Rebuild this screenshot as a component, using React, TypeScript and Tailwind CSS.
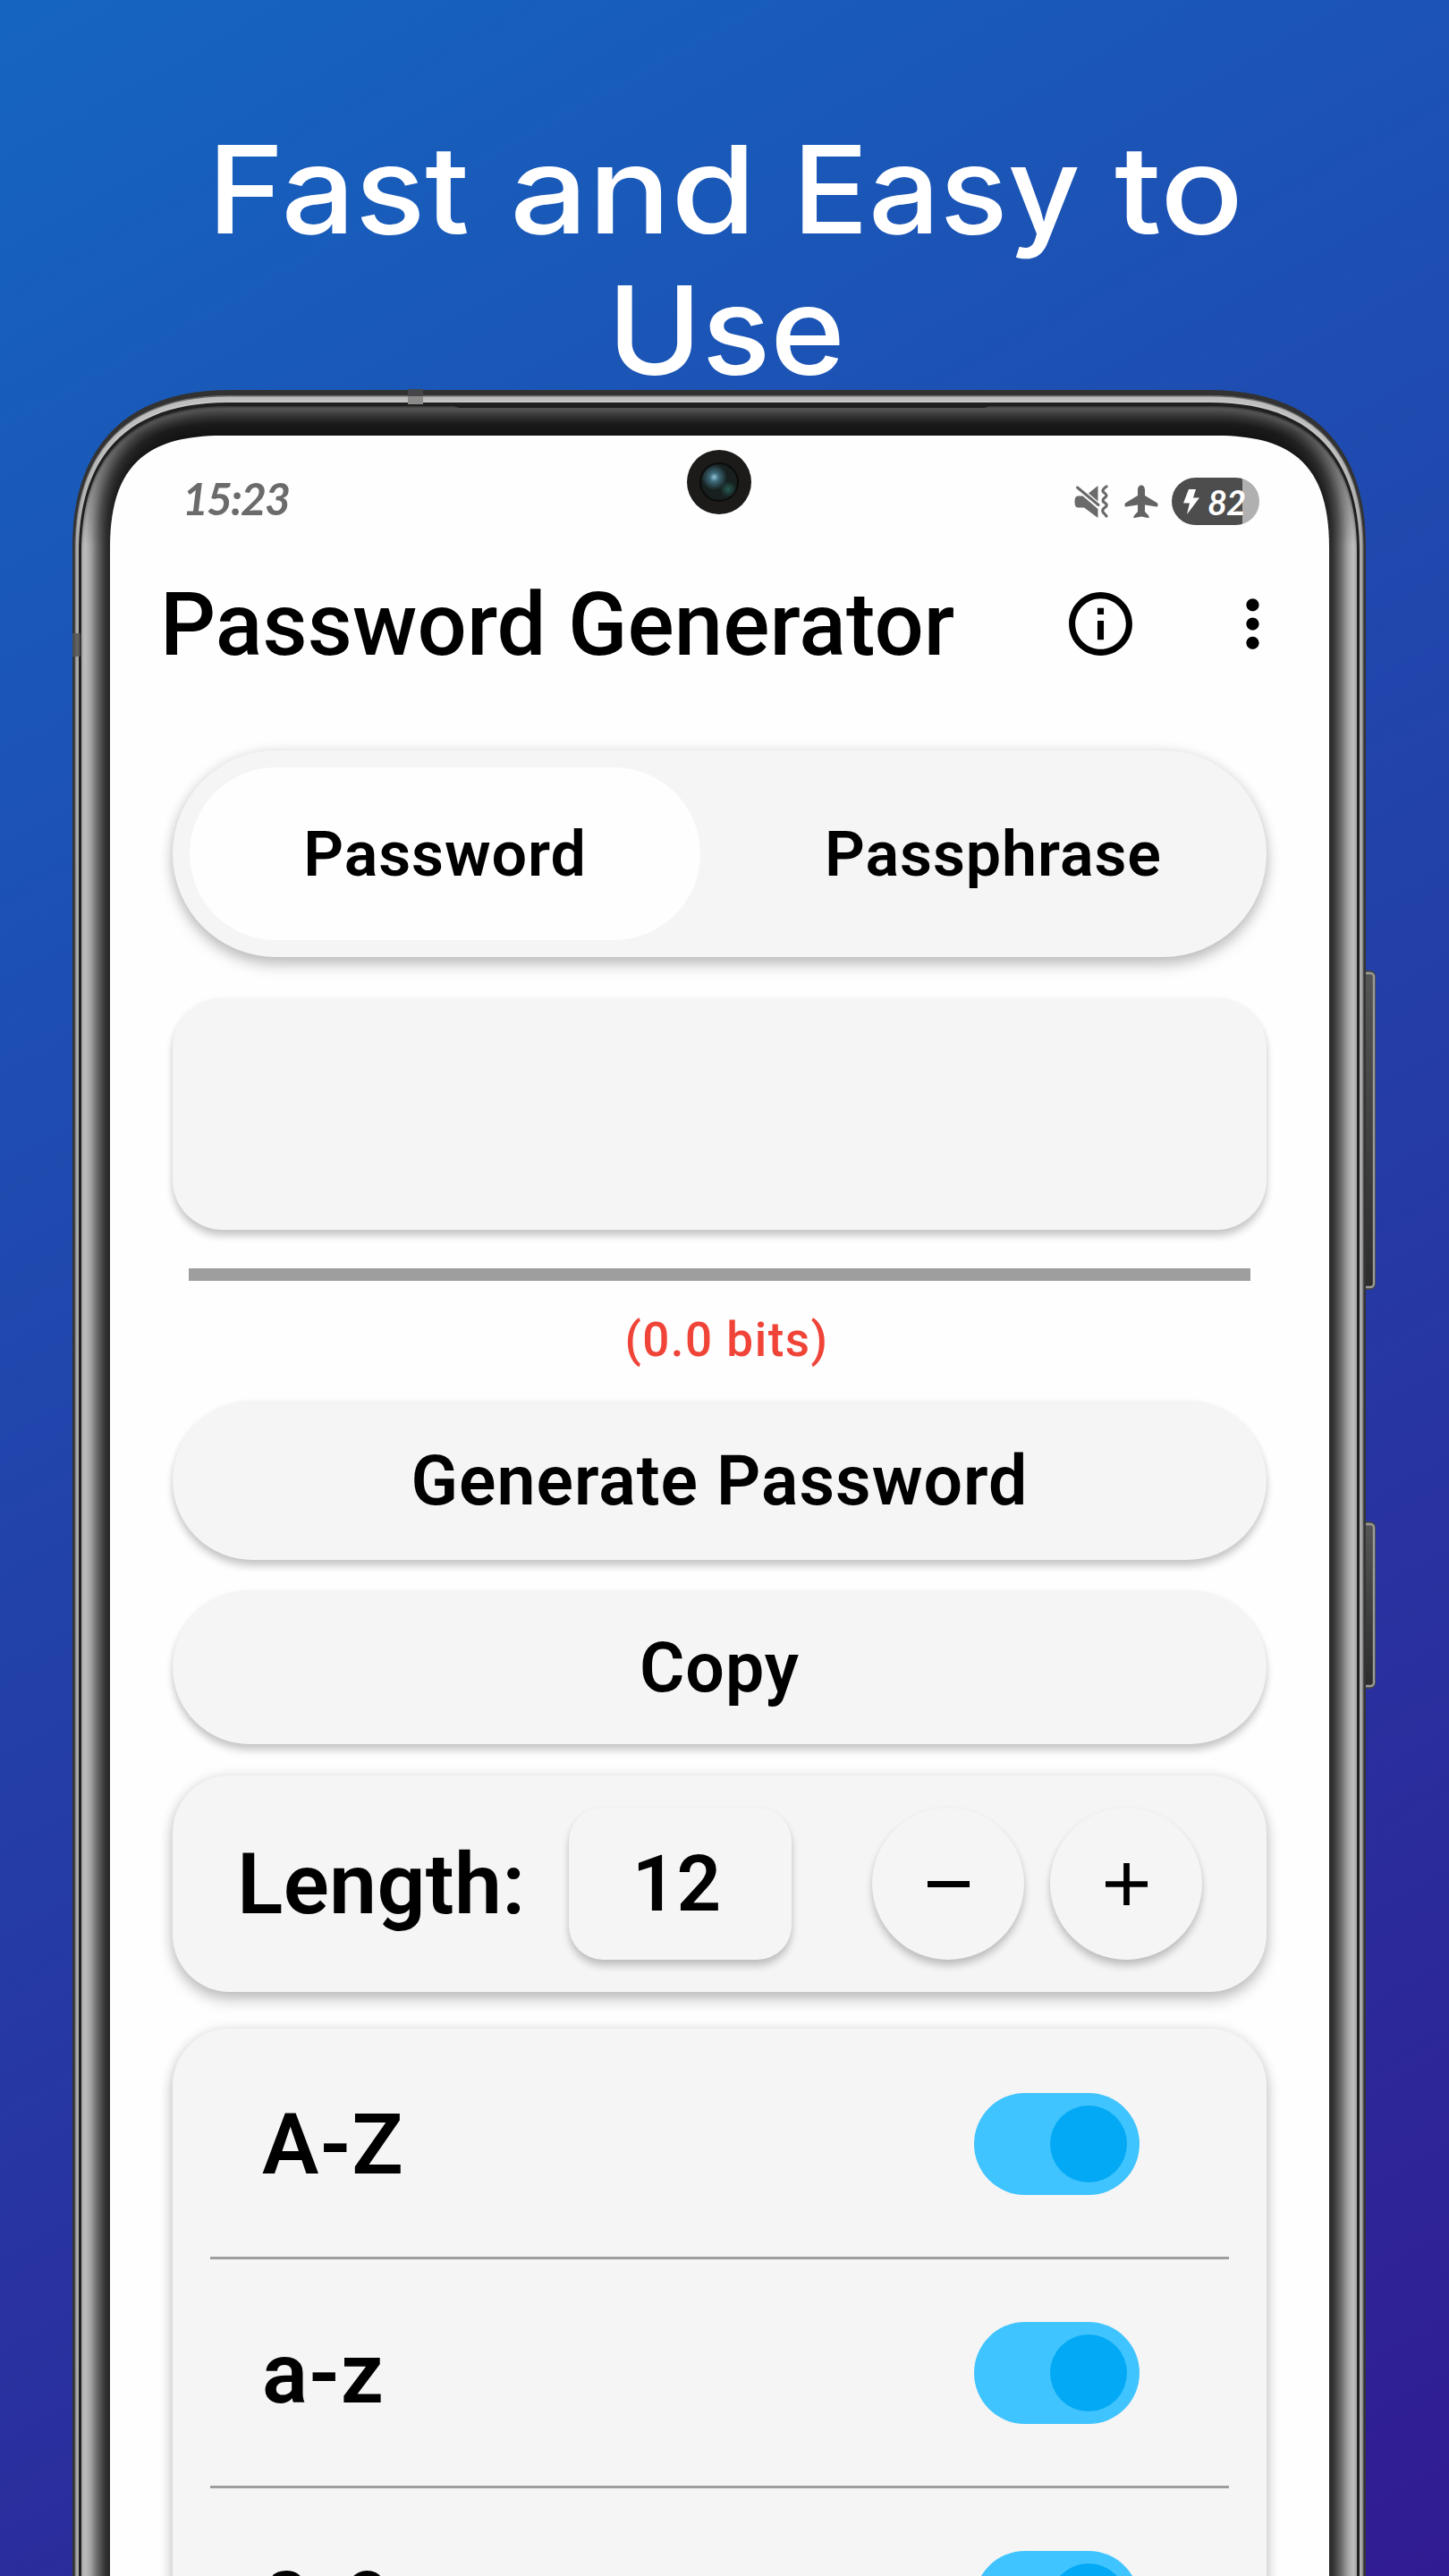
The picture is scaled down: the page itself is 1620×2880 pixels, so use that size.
import React from "react";
import { MdInfoOutline, MdMoreVert } from "react-icons/md";

type Corner = { l: number; t: number; r: number; k: number };

// Screen-shaped outline that runs off the bottom of the page.
function outline({ l, t, r, k }: Corner, right: number) {
  const c = r * (1 - k);
  return `M${l} 2900V${t + r}C${l} ${t + c} ${l + c} ${t} ${l + r} ${t}H${right - r}C${right - c} ${t} ${right} ${t + c} ${right} ${t + r}V2900Z`;
}

const OUTER = { l: 81, t: 436, right: 1527, r: 175, k: 0.648 };
const INNER = { l: 123, t: 487, right: 1486, r: 125, k: 0.702 };

const mix = (a: number, b: number, f: number) => a + (b - a) * f;

function ramp(stops: [number, number][], f: number) {
  for (let i = 1; i < stops.length; i++) {
    if (f <= stops[i][0]) {
      const [a, va] = stops[i - 1];
      const [b, vb] = stops[i];
      return Math.round(mix(va, vb, (f - a) / (b - a)));
    }
  }
  return stops[stops.length - 1][1];
}

// [inset left, inset top, grey at sides, grey at top]
const rims: [number, number, number, number][] = [
  [0, 0, 52, 50],
  [2.5, 6, 100, 110],
  [3.5, 7.5, 165, 190],
  [5.5, 12, 175, 200],
  [7, 14, 30, 32],
  [8.5, 17, 34, 30],
];
const STEPS = 28;
for (let i = 0; i < STEPS; i++) {
  const f = i / (STEPS - 1);
  rims.push([
    mix(10, 41, f),
    mix(18, 50, f),
    ramp([[0, 165], [0.1, 190], [0.3, 165], [0.6, 95], [0.85, 50], [1, 38]], f),
    ramp([[0, 60], [0.08, 84], [0.35, 50], [0.6, 26], [1, 18]], f),
  ]);
}

function PhoneFrame() {
  return (
    <svg className="absolute inset-0 -z-10 h-[2880px] w-[1620px]" viewBox="0 0 1620 2880">
      <defs>
        {rims.map(([, , side, top], i) => (
          <linearGradient key={i} id={`rim${i}`} gradientUnits="userSpaceOnUse" x1="0" x2="0" y1="436" y2="610">
            <stop offset="0.28" stopColor={`rgb(${top},${top},${top})`} />
            <stop offset="1" stopColor={`rgb(${side},${side},${side})`} />
          </linearGradient>
        ))}
        <linearGradient id="key" x1="0" x2="0" y1="0" y2="1">
          <stop offset="0" stopColor="#555" />
          <stop offset="1" stopColor="#2c2c2c" />
        </linearGradient>
      </defs>
      {[
        [1085, 1442],
        [1701, 1888],
      ].map(([a, b]) => (
        <g key={a}>
          <rect x="1510" y={a} width="28" height={b - a} rx="6" fill="#444" />
          <rect x="1510" y={a + 3} width="26" height={b - a - 6} rx="4" fill="url(#key)" stroke="#9b9b96" strokeWidth="2.4" />
        </g>
      ))}
      {rims.map(([dx, dy], i) => {
        const f = dx / (INNER.l - OUTER.l);
        return (
          <path
            key={i}
            fill={`url(#rim${i})`}
            d={outline({ l: OUTER.l + dx, t: OUTER.t + dy, r: mix(OUTER.r, INNER.r, f), k: mix(OUTER.k, INNER.k, f) }, OUTER.right - dx)}
          />
        );
      })}
      <path d="M506 453.5L514 456H1100L1108 453.5Z" fill="#1e1e1e" />
      <rect x="456" y="435" width="17" height="8" fill="#44464a" />
      <rect x="456" y="443" width="17" height="9" fill="#8a8a88" />
      <rect x="81" y="708" width="9" height="26" fill="#555" fillOpacity="0.85" />
      <path fill="#fefefe" d={outline(INNER, INNER.right)} />
    </svg>
  );
}

function Camera() {
  return (
    <svg className="absolute left-[644px] top-[15px] size-[74px]" viewBox="0 0 74 74">
      <defs>
        <radialGradient id="lens" cx="0.37" cy="0.37" r="0.34">
          <stop offset="0" stopColor="#8fc4d6" />
          <stop offset="0.35" stopColor="#3f6b7c" />
          <stop offset="1" stopColor="#17201f" />
        </radialGradient>
        <radialGradient id="glint">
          <stop offset="0" stopColor="#265c52" />
          <stop offset="1" stopColor="#265c52" stopOpacity="0" />
        </radialGradient>
      </defs>
      <circle cx="37" cy="37" r="36" fill="#1c1b19" />
      <circle cx="37" cy="37" r="21" fill="url(#lens)" stroke="#0b0b0b" strokeWidth="2" />
      <circle cx="47" cy="45" r="9" fill="url(#glint)" />
    </svg>
  );
}

function StatusIcons() {
  return (
    <div className="flex items-center">
      <svg className="h-[38px] w-[38px]" viewBox="0 0 38 38" fill="#6a6a6a">
        <path d="M4 12.500Q0.500 13 0.500 18.500Q0.500 25.500 4 25.500H11L26.500 37V27L9.500 12.500Z" />
        <path d="M26.500 1V18.500L16 9.500Z" />
        <path d="M3.500 3L27 22.500" stroke="#6a6a6a" strokeWidth="3" strokeLinecap="round" fill="none" />
        <path d="M36 2Q30 6 33 8.500Q38.500 12 34 14.500Q30 17.500 34 20Q38.500 23 34 25.500Q30 28.500 33 31.500L36 35" stroke="#6a6a6a" strokeWidth="3.200" strokeLinecap="round" fill="none" />
      </svg>
      <svg className="ml-[18px] h-[38px] w-[38px]" viewBox="0 0 38 38" fill="#636363">
        <path d="M19 0.500C21.800 0.500 23 3 23 6V12L37 20.500Q38.500 24.500 36 24.500L23 22.500V30L27.500 35V37.200L19 35.500L10.500 37.200V35L15 30V22.500L2 24.500Q-0.500 24.500 1 20.500L15 12V6C15 3 16.200 0.500 19 0.500Z" />
      </svg>
      <div className="ml-[15px] flex h-[53px] w-[98px] items-center overflow-hidden rounded-full bg-gradient-to-r from-[#4d4d4d] from-[81%] to-[#b0b0b0] to-[81%] pl-[13px]">
        <svg className="h-[28px] w-[18px]" viewBox="0 0 18 28" fill="#fff">
          <path d="M6 0H14L11 9.500H18L4 28L7 15.500H0Z" />
        </svg>
        <span className="ml-[9px] font-['Lato'] text-[38px] font-bold italic leading-none tracking-[-1px] text-white">82</span>
      </div>
    </div>
  );
}

function Toggle() {
  return (
    <div className="flex h-[114px] w-[185px] items-center justify-end rounded-full bg-[#40c4ff] pr-[14px]">
      <div className="size-[86px] rounded-full bg-[#03a9f4]" />
    </div>
  );
}

const soft = "shadow-[0_7px_9px_rgba(0,0,0,0.2),0_1px_6px_rgba(0,0,0,0.05)]";
const deep = "shadow-[0_9px_16px_rgba(0,0,0,0.22),0_0_14px_rgba(0,0,0,0.1)]";

export default function App() {
  return (
    <div className="relative isolate h-[2880px] w-[1620px] overflow-hidden bg-[linear-gradient(151deg,#1565c0,#311b92)] font-['Roboto',sans-serif] font-medium text-black">
      <PhoneFrame />
      <h1 className="h-[487px] pt-[133px] font-['Inter',sans-serif] text-[136px] font-medium leading-[157px] text-white">
        <span className="flex pl-[232px]">
          <span className="w-[338px] origin-left scale-x-[1.069]">Fast</span>
          <span className="w-[316px] origin-left scale-x-[1.133]">and</span>
          <span className="w-[360px] origin-left scale-x-[1.035]">Easy</span>
          <span className="w-[160px] origin-left scale-x-[1.135]">to</span>
        </span>
        <span className="flex scale-x-[1.046] justify-center pl-[4px]">Use</span>
      </h1>
      <main className="relative ml-[123px] flex h-[2393px] w-[1363px] flex-col px-[70px]">
        <Camera />
        <div className="mt-[47px] mr-[8px] flex h-[53px] shrink-0 items-center justify-between pl-[11px]">
          <span className="-mt-[8px] font-['Lato'] text-[50px] font-bold italic leading-none tracking-[-2px] text-[#6b6b6b]">15:23</span>
          <StatusIcons />
        </div>
        <header className="mt-[60px] -ml-[14px] flex h-[100px] shrink-0 items-center">
          <h2 className="w-[975px] shrink-0 whitespace-nowrap pt-[6px] text-[97.5px] leading-none tracking-[0.1px]">Password Generator</h2>
          <MdInfoOutline className="ml-[34px] size-[85px] shrink-0" />
          <MdMoreVert className="ml-[85px] size-[85px] shrink-0" />
        </header>
        <div className={`mt-[92px] flex h-[231px] w-[1223px] shrink-0 rounded-full bg-[#f5f5f5] p-[19px] text-[70px] font-semibold tracking-[0.9px] ${deep}`}>
          <div className="flex w-[571px] items-center justify-center rounded-full bg-[#fefefe] pt-[2px]">Password</div>
          <div className="ml-[41px] flex flex-1 items-center justify-center pt-[2px]">Passphrase</div>
        </div>
        <div className={`mt-[46px] h-[259px] w-[1223px] shrink-0 rounded-[56px] bg-[#f5f5f5] ${soft}`} />
        <div className="mt-[43px] ml-[18px] h-[14px] w-[1187px] shrink-0 bg-[#9e9e9e]" />
        <p className="mt-[36px] h-[60px] shrink-0 pl-[16px] text-center text-[53px] leading-[60px] tracking-[1.5px] text-[#f04438]">(0.0 bits)</p>
        <button className={`mt-[38px] flex h-[178px] w-[1223px] shrink-0 items-center justify-center rounded-full bg-[#f5f5f5] pt-[3px] text-[77px] font-semibold tracking-[1px] ${soft}`}>Generate Password</button>
        <button className={`mt-[34px] flex h-[172px] w-[1223px] shrink-0 items-center justify-center rounded-full bg-[#f5f5f5] pt-[3px] text-[77px] font-semibold tracking-[1px] ${soft}`}>Copy</button>
        <section className={`mt-[35px] flex h-[242px] w-[1223px] shrink-0 items-center rounded-[64px] bg-[#f5f5f5] pl-[72px] ${deep}`}>
          <span className="w-[371px] pt-[2px] text-[95px] font-semibold tracking-[0.3px]">Length:</span>
          <div className={`flex h-[170px] w-[249px] items-center justify-center rounded-[38px] bg-[#f5f5f5] pr-[8px] text-[87px] font-semibold ${soft}`}>12</div>
          <button className={`ml-[90px] flex size-[170px] items-center justify-center rounded-full bg-[#f5f5f5] ${soft}`}>
            <span className="h-[7px] w-[47px] bg-black" />
          </button>
          <button className={`ml-[29px] flex size-[170px] items-center justify-center rounded-full bg-[#f5f5f5] ${soft}`}>
            <svg className="size-[47px]" viewBox="0 0 14 14"><path d="M6 0H8V6H14V8H8V14H6V8H0V6H6Z" /></svg>
          </button>
        </section>
        <section className={`mt-[41px] w-[1223px] shrink-0 rounded-t-[64px] bg-[#f5f5f5] px-[42px] pt-[2px] pb-[40px] ${deep}`}>
          {["A-Z", "a-z", "0-9"].map((label) => (
            <div key={label} className="flex h-[256px] items-center justify-between border-b-[3px] border-[#9e9e9e] pr-[100px] pl-[58px]">
              <span className="pt-[3px] text-[95px] font-semibold tracking-[1px]">{label}</span>
              <Toggle />
            </div>
          ))}
        </section>
      </main>
    </div>
  );
}
